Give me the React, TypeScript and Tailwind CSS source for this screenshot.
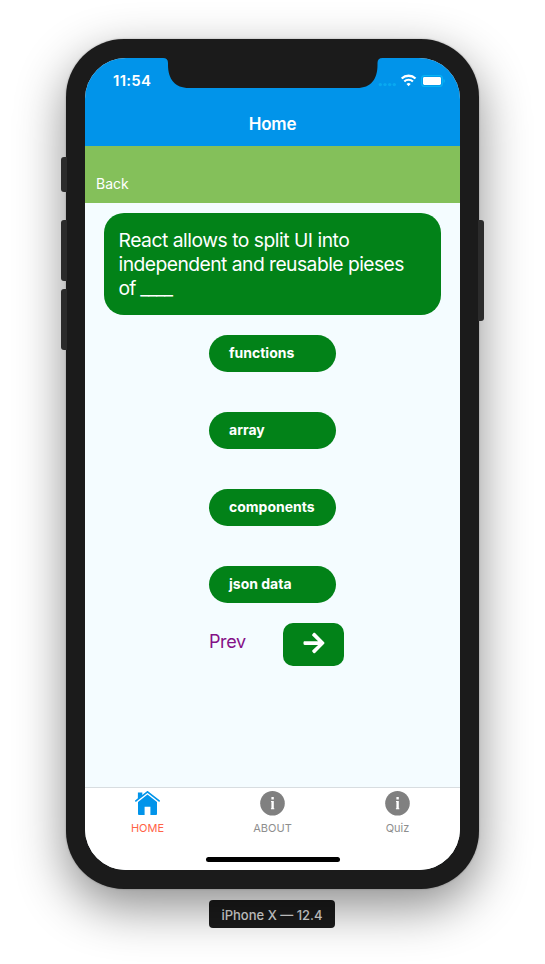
import React from "react";
import { FaArrowRight } from "react-icons/fa";

const answers = ["functions", "array", "components", "json data"];

function StatusBar() {
  return (
    <div className="flex h-11 items-start justify-between pl-7 pr-[15px] pt-[13px] text-white">
      <span className="text-[15px] font-semibold leading-5 tracking-[0.3px]">11:54</span>
      <svg className="mt-[3px]" width="68" height="14" viewBox="0 0 68 14" fill="none">
        <g fill="#08a9f1">
          <circle cx="3.3" cy="10.6" r="1.7" />
          <circle cx="8" cy="10.6" r="1.7" />
          <circle cx="12.7" cy="10.6" r="1.7" />
          <circle cx="17.3" cy="10.6" r="1.7" />
        </g>
        <path d="M24.7 4.5a10 10 0 0 1 13.8 0" stroke="#fff" strokeWidth="2.3" />
        <path d="M27.3 7.5a6.1 6.1 0 0 1 8.6 0" stroke="#fff" strokeWidth="2.2" />
        <path d="M29.5 10a3 3 0 0 1 4.2 0L31.6 12.3z" fill="#fff" />
        <rect x="44.6" y="1.6" width="20.8" height="10.8" rx="3" stroke="#08b4f4" strokeWidth="1.1" />
        <rect x="46" y="3" width="18" height="8" rx="1.4" fill="#fff" />
        <path d="M66.6 5v4q1.3-.7 1.3-2T66.6 5z" fill="#08b4f4" />
      </svg>
    </div>
  );
}

function Notch() {
  return (
    <svg className="absolute left-[78px] top-[-1px]" width="220" height="31" viewBox="0 0 220 31">
      <path
        d="M0 0V1Q5 1 5 6V8C5 22 12 31 26 31H194C208 31 214.5 22 214.5 8V6Q214.5 1 219.5 1V0Z"
        fill="#1b1b1b"
      />
    </svg>
  );
}

function HomeIcon() {
  return (
    <svg width="25" height="25" viewBox="0 0 25 25" fill="#0194ea">
      <path d="M2.9 1.6h4.4v3L2.9 8.2z" />
      <path d="M.9 9.9 12.5 .9 24.1 9.9" fill="none" stroke="#0194ea" strokeWidth="1.7" strokeLinecap="round" />
      <path d="M12.5 3.6 3 11V23q0 1 1 1h5.6v-8.3h5.8V24H21q1 0 1-1V11z" />
    </svg>
  );
}

function InfoIcon() {
  return (
    <svg width="25" height="25" viewBox="0 0 25 25">
      <circle cx="12.5" cy="12.3" r="12.3" fill="#808080" />
      <path d="M11.4 6.1h2.4v2.3h-2.4zM11 10h2.8v7.3h.5v.9h-3.4v-.9h.5v-6.4H11z" fill="#fff" />
    </svg>
  );
}

function Tab({ label, active, icon }: { label: string; active?: boolean; icon: React.ReactNode }) {
  return (
    <div className="flex flex-1 flex-col items-center pt-[3px]">
      {icon}
      <span className={`mt-1 text-[11px] leading-4 ${active ? "text-[#ff6347]" : "text-[#8e8e8e]"}`}>{label}</span>
    </div>
  );
}

export default function App() {
  return (
    <main className="flex h-[964px] w-[545px] flex-col items-center overflow-hidden bg-white pt-[39px] font-['Inter',sans-serif]">
      <div className="relative h-[850px] w-[413px] shrink-0">
        <div className="h-full rounded-[58px] bg-[#1b1b1b] p-[19px] shadow-[0_18px_50px_rgba(0,0,0,0.45),0_0_2px_rgba(0,0,0,0.3)]">
          <div className="relative flex h-[812px] w-[375px] flex-col overflow-hidden rounded-[41px] bg-[#f4fcff]">
            <header className="h-[88px] shrink-0 bg-[#0194ea]">
              <StatusBar />
              <h1 className="pt-[10px] text-center text-[17px] font-semibold leading-6 tracking-[-0.2px] text-white">Home</h1>
            </header>
            <div className="flex h-[57px] shrink-0 items-end bg-[#84c05a] pb-[9px] pl-[11px] text-sm leading-5 text-white">Back</div>
            <section className="flex flex-1 flex-col">
              <div className="ml-[19px] mt-[10px] h-[102px] w-[337px] rounded-[20px] bg-[#028218] pl-[14.5px] pt-[15px] text-[19.3px] leading-6 text-white">
                <p className="whitespace-nowrap tracking-[-0.48px]">React allows to split UI into</p>
                <p className="whitespace-nowrap tracking-[-0.54px]">independent and reusable pieses</p>
                <p className="whitespace-nowrap tracking-[-0.8px]">of ____</p>
              </div>
              <div className="ml-[124px] mt-5 flex w-[127px] flex-col gap-10">
                {answers.map((a) => (
                  <button key={a} className="flex h-[37px] items-center rounded-full bg-[#028218] pb-[2px] pl-5 text-sm font-bold text-white">
                    {a}
                  </button>
                ))}
              </div>
              <div className="ml-[124px] mt-5 flex w-[135px] items-start justify-between">
                <span className="pt-[7px] text-[18px] leading-6 tracking-[-0.4px] text-[#841087]">Prev</span>
                <button className="flex h-[43px] w-[61px] items-center justify-center rounded-[10px] bg-[#028218] pb-[3px] text-white">
                  <FaArrowRight size={24} />
                </button>
              </div>
            </section>
            <nav className="flex h-[83px] shrink-0 border-t border-[#d8dde0] bg-white">
              <Tab label="HOME" active icon={<HomeIcon />} />
              <Tab label="ABOUT" icon={<InfoIcon />} />
              <Tab label="Quiz" icon={<InfoIcon />} />
            </nav>
            <Notch />
            <div className="absolute bottom-2 left-[121px] h-[5px] w-[134px] rounded-full bg-black" />
          </div>
        </div>
        <i className="absolute left-[-5px] top-[118px] h-[35px] w-1.5 rounded-l-[3px] bg-[#2b2b2b]" />
        <i className="absolute left-[-5px] top-[181px] h-[61px] w-1.5 rounded-l-[3px] bg-[#2b2b2b]" />
        <i className="absolute left-[-5px] top-[250px] h-[61px] w-1.5 rounded-l-[3px] bg-[#2b2b2b]" />
        <i className="absolute right-[-5px] top-[181px] h-[101px] w-1.5 rounded-r-[3px] bg-[#2b2b2b]" />
      </div>
      <div className="mt-[11px] mr-px flex h-7 w-[126px] shrink-0 items-center justify-center rounded-[4px] bg-[#1b1b1b] pt-[3px] text-[13px] font-medium text-[#dedede]">
        <span className="whitespace-nowrap">iPhone X — 12.4</span>
      </div>
    </main>
  );
}
